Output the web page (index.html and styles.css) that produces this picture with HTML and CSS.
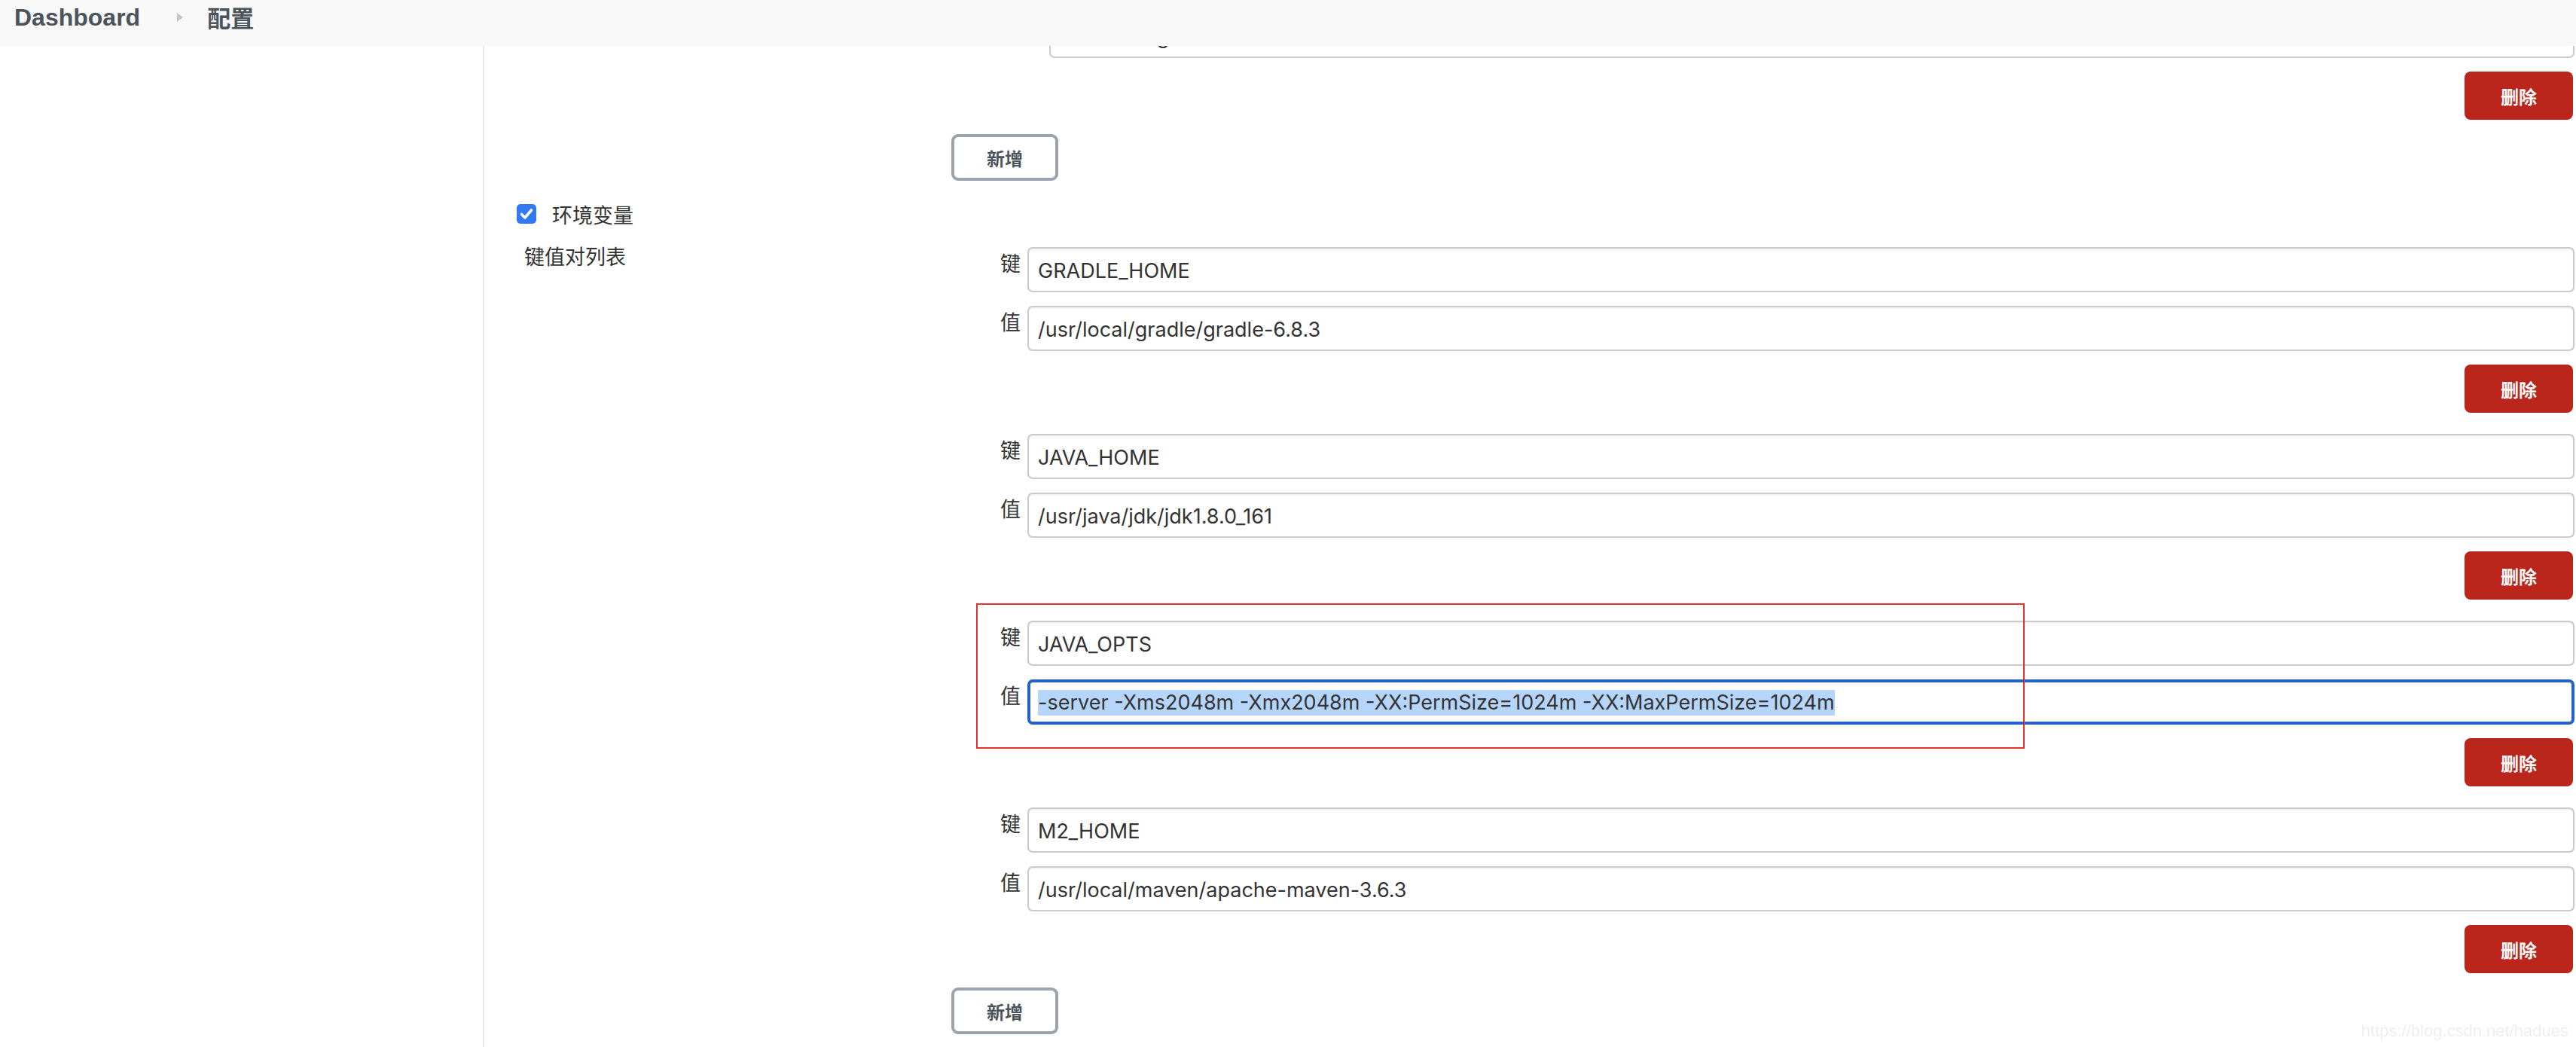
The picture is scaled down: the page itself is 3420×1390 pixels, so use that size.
FILE: index.html
```html
<!DOCTYPE html>
<html lang="zh-CN">
<head>
<meta charset="utf-8">
<title>配置</title>
<link rel="stylesheet" href="styles.css">
</head>
<body>
<header class="topbar">
  <a class="crumb">Dashboard</a>
  <span class="crumb-sep"></span>
  <span class="crumb-current">配置</span>
</header>

<div class="page">
  <aside class="side"></aside>
  <main class="main">

    <section class="row">
      <div class="left"></div>
      <div class="right">
        <div class="kv kv-wide">
          <span class="lbl"></span>
          <div class="field">/usr/local/git</div>
        </div>
        <div class="actions"><button class="btn-del">删除</button></div>
        <button class="btn-add">新增</button>
      </div>
    </section>

    <div class="check-row">
      <span class="checkbox"><svg viewBox="0 0 26 26" width="26" height="26"><path d="M6.5 13.5 L11 18 L19.5 8" fill="none" stroke="#fff" stroke-width="3.6" stroke-linecap="round" stroke-linejoin="round"/></svg></span>
      <span class="check-label">环境变量</span>
    </div>

    <section class="row kv-section">
      <div class="left"><span class="section-label">键值对列表</span></div>
      <div class="right groups">
        <div class="group">
          <div class="kv"><span class="lbl">键</span><div class="field">GRADLE_HOME</div></div>
          <div class="kv"><span class="lbl">值</span><div class="field">/usr/local/gradle/gradle-6.8.3</div></div>
          <div class="actions"><button class="btn-del">删除</button></div>
        </div>
        <div class="group">
          <div class="kv"><span class="lbl">键</span><div class="field">JAVA_HOME</div></div>
          <div class="kv"><span class="lbl">值</span><div class="field">/usr/java/jdk/jdk1.8.0_161</div></div>
          <div class="actions"><button class="btn-del">删除</button></div>
        </div>
        <div class="group marked">
          <div class="kv"><span class="lbl">键</span><div class="field">JAVA_OPTS</div></div>
          <div class="kv"><span class="lbl">值</span><div class="field focused"><span class="sel">-server -Xms2048m -Xmx2048m -XX:PermSize=1024m -XX:MaxPermSize=1024m</span></div></div>
          <div class="actions"><button class="btn-del">删除</button></div>
          <div class="annot"></div>
        </div>
        <div class="group">
          <div class="kv"><span class="lbl">键</span><div class="field">M2_HOME</div></div>
          <div class="kv"><span class="lbl">值</span><div class="field">/usr/local/maven/apache-maven-3.6.3</div></div>
          <div class="actions"><button class="btn-del">删除</button></div>
        </div>
        <button class="btn-add">新增</button>
      </div>
    </section>

  </main>
</div>

<div class="watermark">https://blog.csdn.net/hadues</div>
</body>
</html>
```

FILE: styles.css
```css
* { box-sizing: border-box; }

html, body {
  margin: 0;
  padding: 0;
}

body {
  font-family: Inter, "Noto Sans CJK SC", sans-serif;
  font-size: 27px;
  color: #333;
  background: #fff;
  overflow: hidden;
}

/* ---------- top bar ---------- */
.topbar {
  position: fixed;
  top: 0;
  left: 0;
  right: 0;
  height: 61px;
  background: #f8f8f8;
  z-index: 10;
  display: flex;
  align-items: flex-start;
  padding: 3px 0 0 19px;
}

.crumb {
  font-family: "Liberation Sans", Arial, sans-serif;
  font-weight: bold;
  font-size: 32px;
  line-height: 40px;
  color: #4b535c;
}

.crumb-sep {
  width: 0;
  height: 0;
  margin: 14px 0 0 49px;
  border-left: 8px solid #c6c6c6;
  border-top: 6px solid transparent;
  border-bottom: 6px solid transparent;
}

.crumb-current {
  margin-left: 32px;
  font-family: "Noto Sans CJK SC", sans-serif;
  font-weight: bold;
  font-size: 31px;
  line-height: 40px;
  color: #4b535c;
}

/* ---------- page ---------- */
.page {
  display: flex;
  min-height: 100vh;
}

.side {
  flex: none;
  width: 643px;
  border-right: 2px solid #e9ebee;
}

.main {
  flex: 1;
  padding-top: 17px;
}

.row {
  display: grid;
  grid-template-columns: 620px 1fr;
}

.right {
  padding-right: 2px;
  display: flex;
  flex-direction: column;
  align-items: stretch;
}

/* ---------- key / value fields ---------- */
.kv {
  display: grid;
  grid-template-columns: 92px 1fr;
  column-gap: 9px;
  align-items: start;
}

.kv + .kv { margin-top: 18px; }

.kv-wide { grid-template-columns: 121px 1fr; }

.lbl {
  text-align: right;
  font-size: 27px;
  line-height: 40px;
  padding-top: 3px;
  color: #333;
}

.field {
  height: 60px;
  border: 2px solid #cacaca;
  border-radius: 7px;
  box-shadow: inset 0 2px 2px rgba(0, 0, 0, 0.05);
  padding: 0 12px;
  display: flex;
  align-items: center;
  white-space: nowrap;
  overflow: hidden;
  font-size: 27px;
  padding-top: 3px;
  color: #333;
  background: #fff;
}

.field.focused {
  border: 4px solid #2362c6;
  padding: 2px 10px 0;
  box-shadow: none;
}

.sel {
  background: #b6d5fb;
  line-height: 34px;
}

/* ---------- buttons ---------- */
.actions {
  display: flex;
  justify-content: flex-end;
  margin-top: 18px;
}

.btn-del {
  width: 144px;
  height: 64px;
  margin-right: 2px;
  border: none;
  border-radius: 8px;
  background: #ba261c;
  color: #fff;
  font-family: "Noto Sans CJK SC", sans-serif;
  font-weight: bold;
  font-size: 24px;
  padding: 0;
}

.btn-add {
  align-self: flex-start;
  width: 142px;
  height: 62px;
  margin-top: 19px;
  border: 4px solid #9ba4ac;
  border-radius: 9px;
  background: #fff;
  color: #4b535c;
  font-family: "Noto Sans CJK SC", sans-serif;
  font-weight: bold;
  font-size: 24px;
  padding: 0;
}

/* ---------- environment section ---------- */
.check-row {
  display: flex;
  align-items: center;
  margin: 31px 0 0 43px;
  height: 26px;
}

.checkbox {
  width: 26px;
  height: 26px;
  border-radius: 5px;
  background: #3179f5;
  display: flex;
}

.check-label {
  margin-left: 21px;
  font-size: 27px;
  line-height: 26px;
  padding-top: 5px;
}

.kv-section { margin-top: 29px; }

.section-label {
  display: block;
  padding-left: 53px;
  font-size: 27px;
  line-height: 28px;
  padding-top: 2px;
}

.groups { padding-top: 2px; }

.group {
  position: relative;
  margin-bottom: 28px;
}

.group:last-of-type { margin-bottom: 0; }

.annot {
  position: absolute;
  left: 33px;
  top: -23px;
  width: 1392px;
  height: 193px;
  border: 2px solid #e3322a;
  pointer-events: none;
}

.watermark {
  position: fixed;
  right: 10px;
  bottom: 8px;
  font-family: "Liberation Sans", Arial, sans-serif;
  font-size: 22px;
  color: #efefef;
}
```
